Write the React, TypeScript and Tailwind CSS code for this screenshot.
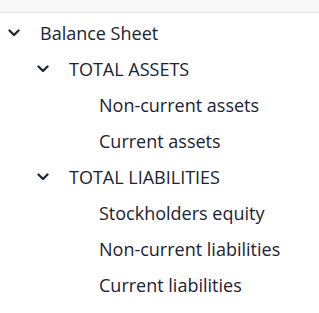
import React from 'react'

type Node = { label: string; children?: Node[] }

const TREE: Node = {
  label: 'Balance Sheet',
  children: [
    { label: 'TOTAL ASSETS', children: [{ label: 'Non-current assets' }, { label: 'Current assets' }] },
    {
      label: 'TOTAL LIABILITIES',
      children: [{ label: 'Stockholders equity' }, { label: 'Non-current liabilities' }, { label: 'Current liabilities' }],
    },
  ],
}

const INDENT = [0, 29, 59]

function Chevron() {
  return (
    <svg width="12" height="8" viewBox="0 0 12 8" className="text-[#222733]">
      <path d="M1.5 1.5 L6 6 L10.5 1.5" fill="none" stroke="currentColor" strokeWidth="2.3" strokeLinecap="round" strokeLinejoin="round" />
    </svg>
  )
}

function Row({ node, depth }: { node: Node; depth: number }) {
  const hasKids = !!node.children?.length
  return (
    <>
      <div className="flex items-center h-9" style={{ paddingLeft: 8 + INDENT[depth] }}>
        <span className="w-8 flex items-center">{hasKids && <Chevron />}</span>
        <span className="text-[18px] text-[#1b2233] whitespace-nowrap">{node.label}</span>
      </div>
      {node.children?.map((c) => <Row key={c.label} node={c} depth={depth + 1} />)}
    </>
  )
}

export default function App() {
  return (
    <div className="w-[319px] h-[313px] bg-white" style={{ fontFamily: '"Open Sans", sans-serif' }}>
      <div className="h-[13px] bg-[#f8f8f8] border-b border-[#e4e4e4]" />
      <div className="pt-[2px]">
        <Row node={TREE} depth={0} />
      </div>
    </div>
  )
}
